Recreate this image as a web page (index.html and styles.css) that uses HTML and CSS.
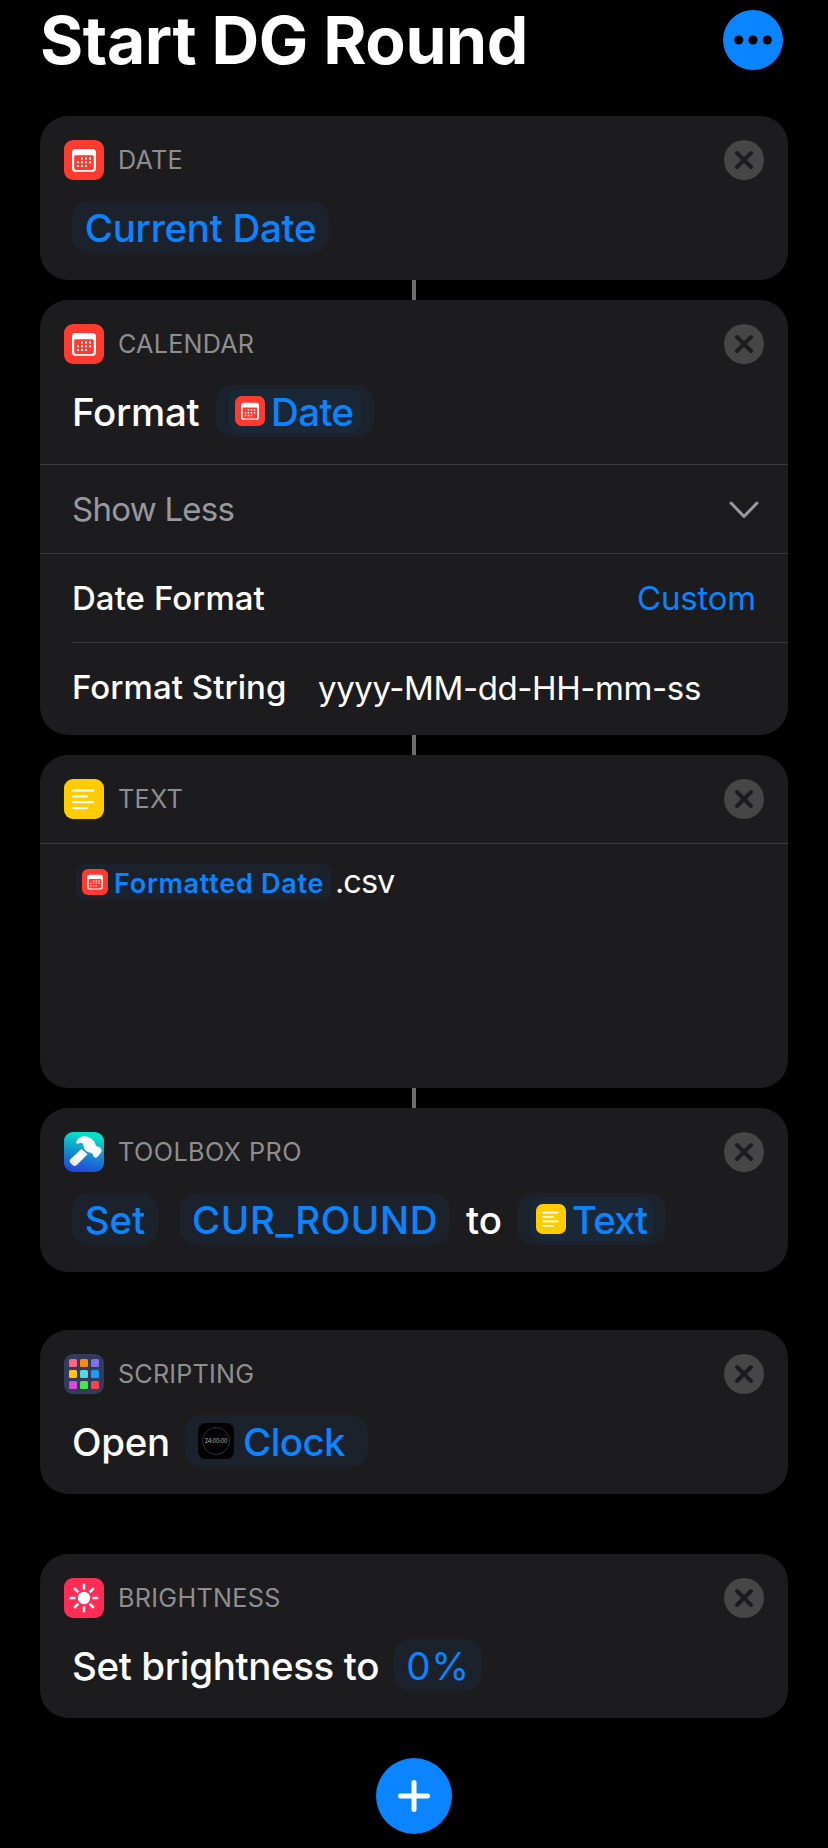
FILE: index.html
```html
<!DOCTYPE html>
<html lang="en">
<head>
<meta charset="utf-8">
<title>Start DG Round</title>
<link rel="stylesheet" href="styles.css">
</head>
<body>
<svg class="defs" width="0" height="0" aria-hidden="true">
  <defs>
    <linearGradient id="toolbox" x1="0.6" y1="0" x2="0.4" y2="1">
      <stop offset="0.08" stop-color="#06dfc8"/><stop offset="0.5" stop-color="#1493cf"/><stop offset="1" stop-color="#2046d8"/>
    </linearGradient>
    <linearGradient id="steel" x1="0.8" y1="0" x2="0.2" y2="1">
      <stop offset="0.4" stop-color="#fff"/><stop offset="1" stop-color="#e3e3e6"/>
    </linearGradient>
    <symbol id="calendar" viewBox="0 0 40 40">
      <rect width="40" height="40" rx="9" fill="#ff3b30"/>
      <path fill="#fff" fill-rule="evenodd" d="M11.5 9h17A3.5 3.5 0 0 1 32 12.500V28.200a3.500 3.500 0 0 1-3.500 3.500h-17A3.500 3.500 0 0 1 8 28.200V12.500A3.500 3.500 0 0 1 11.500 9ZM11.500 15.200a1.300 1.300 0 0 0-1.300 1.300V28a2 2 0 0 0 2 2h15.600a2 2 0 0 0 2-2V16.500a1.300 1.300 0 0 0-1.300-1.300Z"/>
      <path stroke="#fff" stroke-width="2" d="M17 18.500h2m2 0h2m2 0h2M13 22.200h2m2 0h2m2 0h2m2 0h2M13 26h2m2 0h2m2 0h2"/>
    </symbol>
    <symbol id="lines" viewBox="0 0 40 40">
      <rect width="40" height="40" rx="9" fill="#ffcc00"/>
      <path stroke="#fff" stroke-width="2.200" stroke-linecap="round" d="M9.200 11.500h20M9.200 17.400h13.600M9.200 23.200h20M9.200 29.100h13.600"/>
    </symbol>
    <symbol id="close" viewBox="0 0 40 40">
      <circle cx="20" cy="20" r="20" fill="#464646"/>
      <path stroke="#1c1c1e" stroke-width="4" stroke-linecap="round" d="M13 13l14 14M27 13L13 27"/>
    </symbol>
  </defs>
</svg>
<main class="editor">
  <header class="titlebar">
    <h1 class="title">Start DG Round</h1>
    <svg class="more" viewBox="0 0 60 60"><circle cx="30" cy="30" r="30" fill="#0a84ff"/><circle cx="15.700" cy="30" r="4.600"/><circle cx="30" cy="30" r="4.600"/><circle cx="44.300" cy="30" r="4.600"/></svg>
  </header>

  <section class="card">
    <div class="head"><svg class="icon"><use href="#calendar"/></svg><span class="caption c-date">DATE</span><svg class="icon"><use href="#close"/></svg></div>
    <div class="summary"><span class="pill p-current"><span class="t-current">Current Date</span></span></div>
  </section>
  <div class="link"></div>

  <section class="card">
    <div class="head"><svg class="icon"><use href="#calendar"/></svg><span class="caption c-calendar">CALENDAR</span><svg class="icon"><use href="#close"/></svg></div>
    <div class="summary"><span class="word w-format">Format</span><span class="pill p-date"><span class="token k-date"><svg class="mini"><use href="#calendar"/></svg><span class="t-date">Date</span></span></span></div>
    <div class="row line"><span class="muted">Show Less</span><svg class="chevron" viewBox="0 0 30 18"><path d="M2 2l13 13.500L28 2" fill="none" stroke="#98989f" stroke-width="3" stroke-linecap="round" stroke-linejoin="round"/></svg></div>
    <div class="row line"><span class="label l-dateformat">Date Format</span><span class="value">Custom</span></div>
    <div class="row inset"><span class="label l-string">Format String</span><span class="entry">yyyy-MM-dd-HH-mm-ss</span></div>
  </section>
  <div class="link"></div>

  <section class="card text-card">
    <div class="head"><svg class="icon"><use href="#lines"/></svg><span class="caption c-text">TEXT</span><svg class="icon"><use href="#close"/></svg></div>
    <div class="textarea line"><span class="chip"><svg class="tiny"><use href="#calendar"/></svg><span class="t-formatted">Formatted Date</span></span><span class="csv">.csv</span></div>
  </section>
  <div class="link"></div>

  <section class="card">
    <div class="head"><svg class="icon" viewBox="0 0 40 40"><rect width="40" height="40" rx="9" fill="url(#toolbox)"/><g fill="url(#steel)"><path d="M6.300 27.200L17.600 17l6 5.200L12.800 33Q10.800 35 8.500 33L6.300 30.800Q4.700 29 6.300 27.200Z"/><path d="M12 11C13 6.500 17 4 20.500 4.200C26 4.500 31.200 8.500 31.800 13.500C32.800 15 35 14.300 36.200 15.800C38 17.800 38 19.500 36.500 21.300L33.200 25.200C31.500 26.500 29.300 25 28.600 22.200C27.500 20.200 24 21.500 21 17.800C18.800 15 20.500 12 17.500 10.900C15.500 10.200 14 12.800 12 11Z"/></g></svg><span class="caption c-toolbox">TOOLBOX PRO</span><svg class="icon"><use href="#close"/></svg></div>
    <div class="summary"><span class="pill p-set"><span class="t-set">Set</span></span><span class="pill p-round"><span class="t-round">CUR_ROUND</span></span><span class="word w-to">to</span><span class="pill p-text"><span class="token k-text"><svg class="mini"><use href="#lines"/></svg><span class="t-text">Text</span></span></span></div>
  </section>

  <section class="card apart-a">
    <div class="head"><svg class="icon" viewBox="0 0 40 40"><rect width="40" height="40" rx="9" fill="#323c5a"/><rect x="5" y="5" width="8" height="8" rx="1.500" fill="#ff6482"/><rect x="16" y="5" width="8" height="8" rx="1.500" fill="#ff8a0c"/><rect x="27" y="5" width="8" height="8" rx="1.500" fill="#7d73ea"/><rect x="5" y="16" width="8" height="8" rx="1.500" fill="#ffc41a"/><rect x="16" y="16" width="8" height="8" rx="1.500" fill="#55d7e0"/><rect x="27" y="16" width="8" height="8" rx="1.500" fill="#1b9aff"/><rect x="5" y="27" width="8" height="8" rx="1.500" fill="#dc48dc"/><rect x="16" y="27" width="8" height="8" rx="1.500" fill="#47e84b"/><rect x="27" y="27" width="8" height="8" rx="1.500" fill="#ff434e"/></svg><span class="caption c-scripting">SCRIPTING</span><svg class="icon"><use href="#close"/></svg></div>
    <div class="summary"><span class="word w-open">Open</span><span class="pill p-clock"><svg class="clock" viewBox="0 0 36 36"><rect width="36" height="36" rx="8" fill="#000"/><circle cx="18" cy="18" r="13.500" fill="none" stroke="#383838" stroke-width="0.900"/><text x="18" y="20" text-anchor="middle" class="clock-time">24:00:00</text></svg><span class="t-clock">Clock</span></span></div>
  </section>

  <section class="card apart-b">
    <div class="head"><svg class="icon" viewBox="0 0 40 40"><rect width="40" height="40" rx="9" fill="#ff2d55"/><circle cx="20" cy="20" r="6.200" fill="#fff"/><path stroke="#fff" stroke-width="2.500" d="M20 5.800v5.700M20 28.500v5.700M5.800 20h5.700M28.500 20h5.700M10.200 10.200l4.200 4.200M25.600 25.600l4.200 4.200M29.800 10.200l-4.200 4.200M14.400 25.600l-4.200 4.200"/></svg><span class="caption c-brightness">BRIGHTNESS</span><svg class="icon"><use href="#close"/></svg></div>
    <div class="summary"><span class="word w-bright">Set brightness to</span><span class="pill p-zero"><span class="t-zero">0%</span></span></div>
  </section>

  <svg class="add" viewBox="0 0 76 76"><circle cx="38" cy="38" r="38" fill="#0a84ff"/><path d="M38 24.500v27M24.500 38h27" stroke="#fff" stroke-width="5" stroke-linecap="round"/></svg>
</main>
</body>
</html>
```
FILE: styles.css
```css
* { box-sizing: border-box; }
body {
  margin: 0;
  background: #000;
  color: #fff;
  font-family: Inter, "Liberation Sans", sans-serif;
}
.defs { position: absolute; }
svg { display: block; flex: none; }
.editor {
  display: flex;
  flex-direction: column;
  width: 828px;
  height: 1848px;
  padding: 10px 40px 0;
  overflow: hidden;
}
.titlebar {
  display: flex;
  align-items: center;
  justify-content: space-between;
  height: 60px;
  margin-bottom: 46px;
  padding-right: 5px;
}
.title {
  margin: 0;
  font-size: 66px;
  font-weight: 700;
  line-height: 60px;
  letter-spacing: -0.4px;
  white-space: nowrap;
}
.more { width: 60px; height: 60px; }
.card {
  flex: none;
  background: #1c1c1e;
  border-radius: 28px;
  overflow: hidden;
}
.link {
  flex: none;
  align-self: center;
  width: 4px;
  height: 20px;
  background: #6c6c73;
}
.apart-a { margin-top: 58px; }
.apart-b { margin-top: 60px; }
.add {
  align-self: center;
  width: 76px;
  height: 76px;
  margin-top: 40px;
}
.head {
  display: flex;
  align-items: center;
  height: 85px;
  padding: 3px 24px 0;
}
.icon { width: 40px; height: 40px; }
.caption {
  flex: 1;
  margin-left: 14px;
  color: #8e8e90;
  font-size: 25.200px;
  line-height: 40px;
  letter-spacing: 0.2px;
}
.c-text, .c-brightness { letter-spacing: 0.3px; }
.c-toolbox { letter-spacing: 0.45px; }
.summary {
  display: flex;
  height: 79px;
  padding-left: 32px;
  font-size: 38.500px;
  font-weight: 500;
  line-height: 54px;
  letter-spacing: -0.3px;
  white-space: nowrap;
}
.pill {
  display: flex;
  justify-content: center;
  height: 52px;
  border-radius: 16px;
  background: #1b222c;
  color: #0a84ff;
}
.token {
  display: flex;
  align-self: center;
  height: 44px;
  padding-left: 6px;
  border-radius: 11px;
  background: #1a2736;
  line-height: 46px;
}
.mini { width: 30px; height: 30px; margin: 7px 6px 0 0; }
.p-current { width: 257px; }
.w-format { width: 144px; }
.p-date { width: 158px; }
.k-date { width: 132px; letter-spacing: -0.6px; }
.p-set { width: 86px; margin-right: 22px; letter-spacing: 0; }
.p-round { width: 270px; margin-right: 16px; letter-spacing: 0.6px; }
.w-to { width: 51px; letter-spacing: 0; }
.p-text { width: 149px; }
.k-text { width: 123px; letter-spacing: -1px; }
.w-open { width: 113px; }
.p-clock { width: 183px; justify-content: flex-start; padding-left: 13px; letter-spacing: -0.6px; }
.clock { width: 36px; height: 36px; margin: 8px 9px 0 0; }
.clock-time { fill: #b5b5b5; font-size: 5.600px; font-weight: 400; letter-spacing: -0.2px; }
.w-bright { width: 322px; letter-spacing: -0.37px; }
.p-zero { width: 88px; font-weight: 400; letter-spacing: 0.8px; }
.row {
  display: flex;
  align-items: center;
  height: 89px;
  padding: 0 32px;
  font-size: 33px;
  white-space: nowrap;
}
.line { border-top: 1px solid #3a3a3c; }
.muted { flex: 1; color: #98989f; letter-spacing: -0.75px; }
.chevron { width: 30px; height: 18px; margin: 2px -3px 0 0; }
.label { flex: 1; font-weight: 500; letter-spacing: 0.05px; }
.value { color: #0a84ff; letter-spacing: -0.2px; }
.inset {
  height: 93px;
  margin-left: 32px;
  padding: 0 0 4px;
  border-top: 1px solid #3a3a3c;
}
.inset .label { flex: none; width: 246px; }
.entry { padding-top: 1px; letter-spacing: -0.4px; }
.text-card .head { height: 88px; padding-top: 0; }
.textarea {
  display: flex;
  height: 245px;
  padding: 20px 36px;
  white-space: nowrap;
}
.chip {
  display: flex;
  width: 255px;
  height: 36px;
  padding-left: 6px;
  border-radius: 8px;
  background: #1b222c;
  color: #0a84ff;
  font-size: 27px;
  font-weight: 600;
  line-height: 39px;
  letter-spacing: 0.72px;
}
.tiny { width: 26px; height: 26px; margin: 5px 6px 0 0; }
.csv { margin-left: 4px; font-size: 32.500px; line-height: 36px; letter-spacing: -1px; }
```
